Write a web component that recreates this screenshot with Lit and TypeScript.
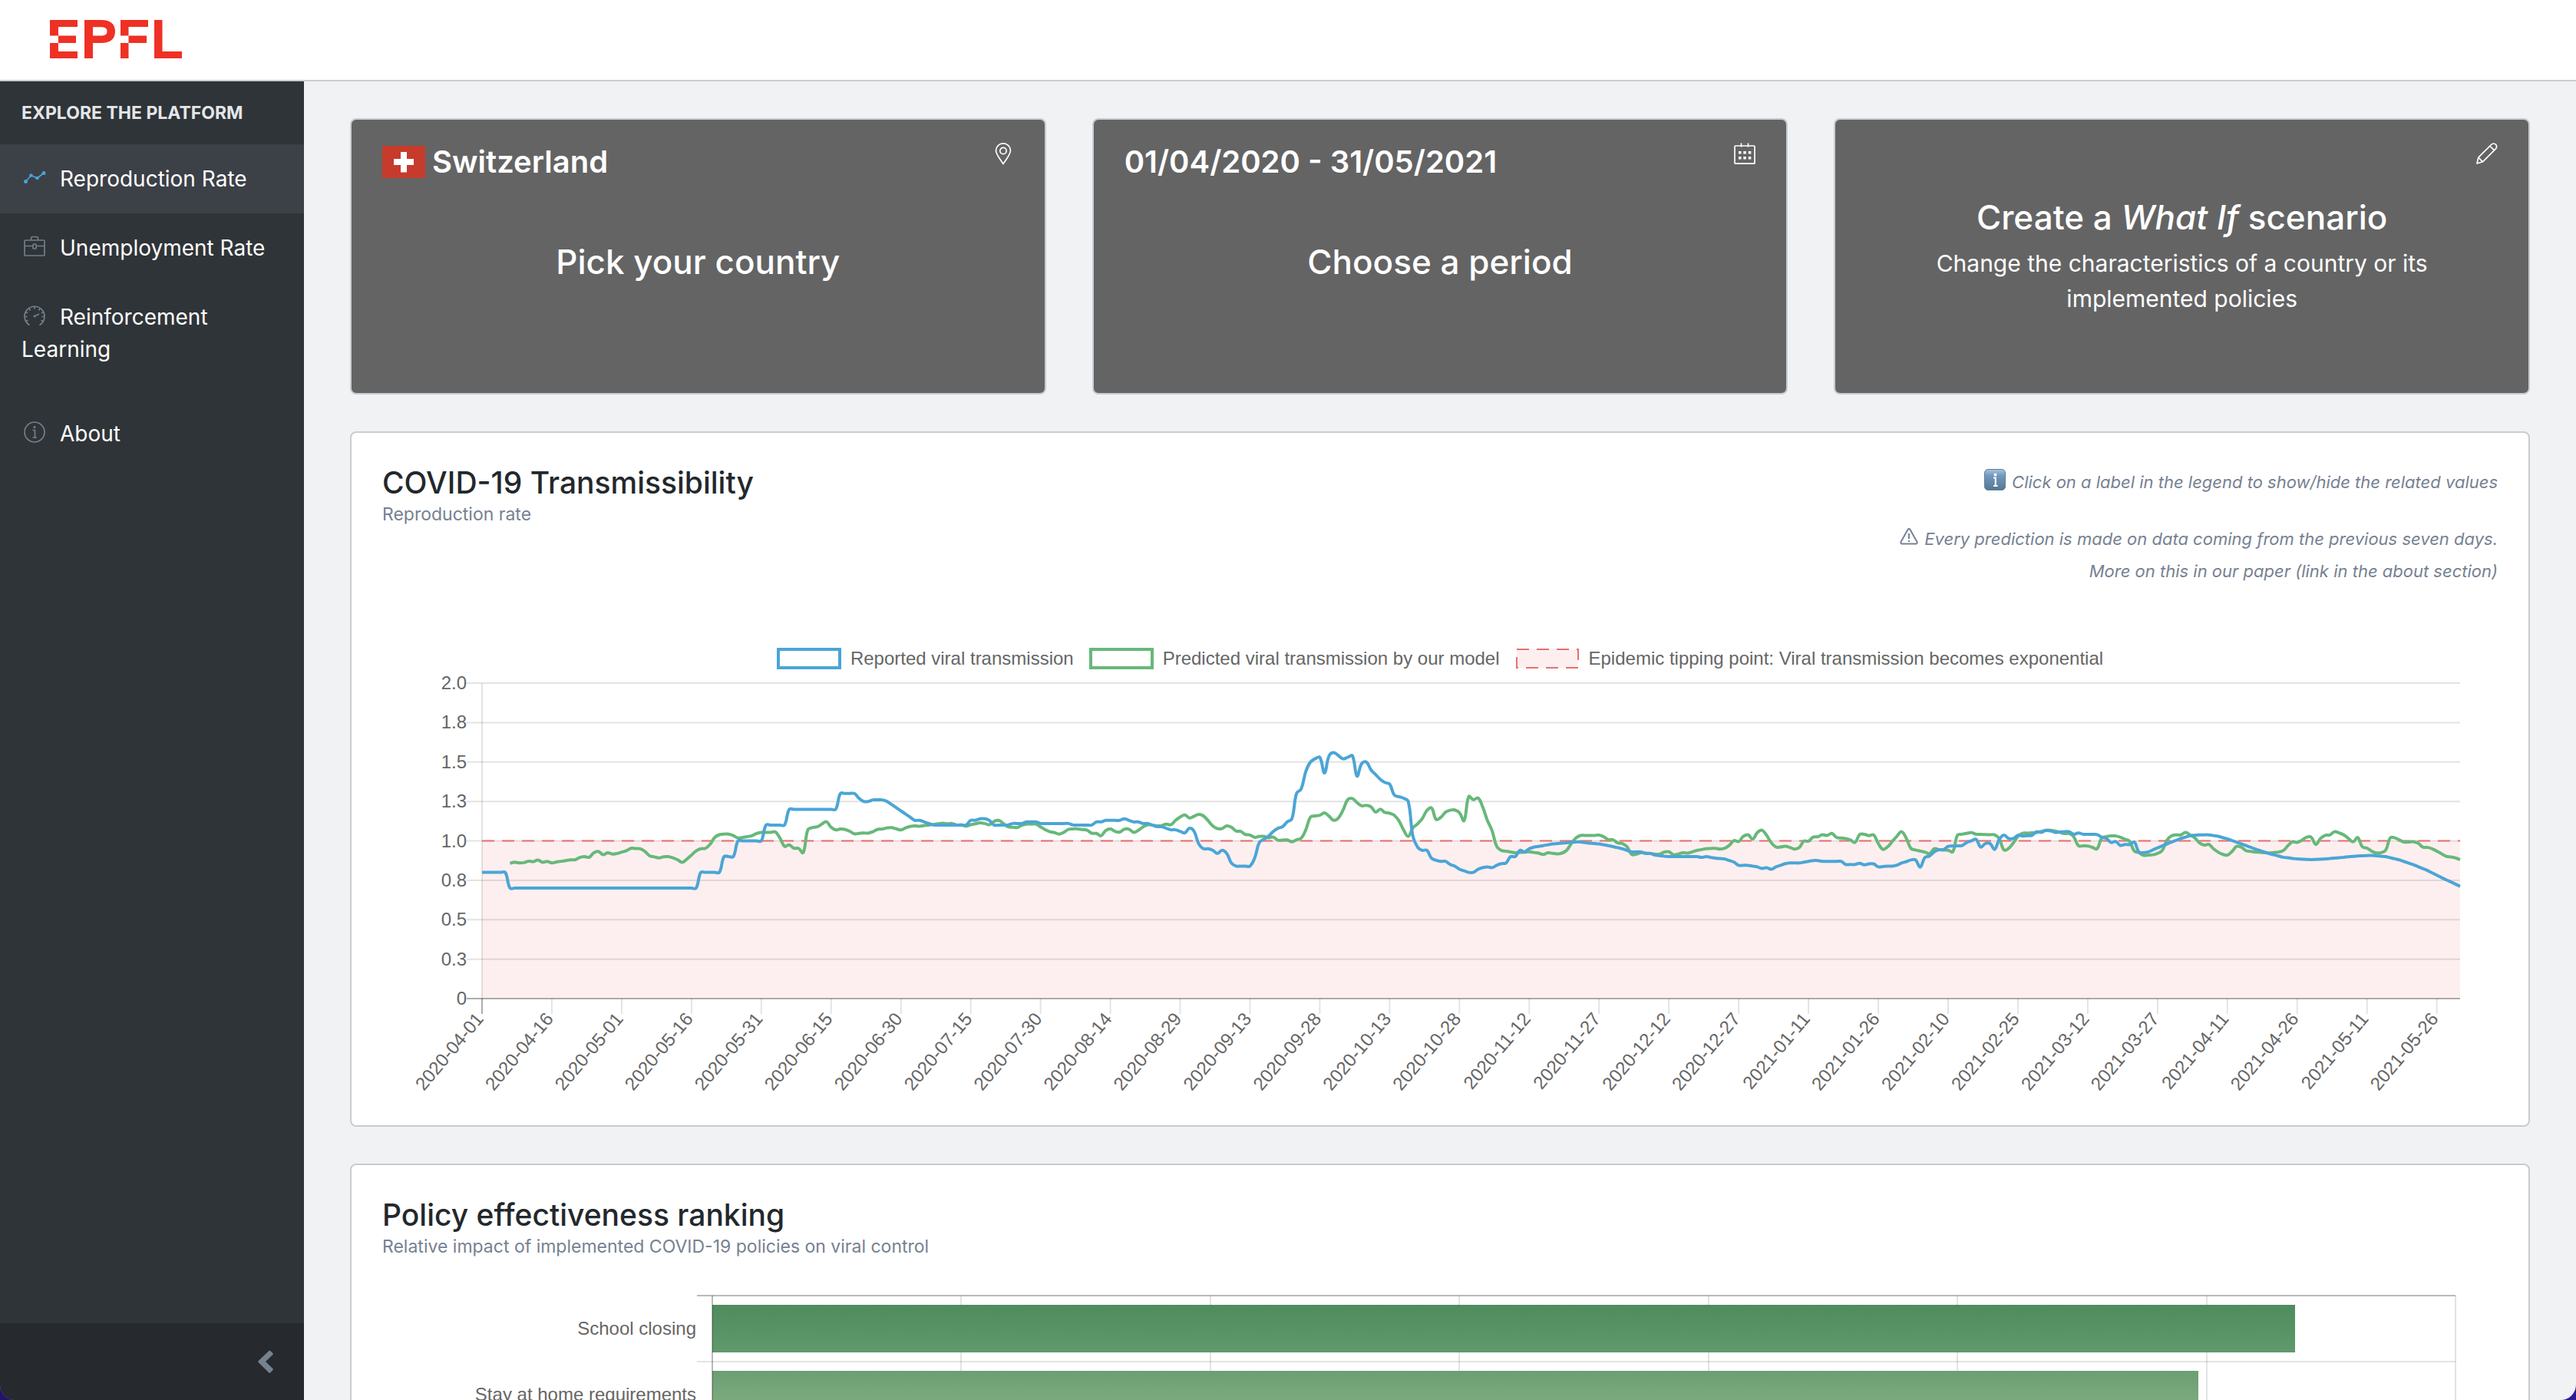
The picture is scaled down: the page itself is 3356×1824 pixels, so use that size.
import { LitElement, html, css, svg } from "lit";
import { customElement, property, state } from "lit/decorators.js";
import { classMap } from "lit/directives/class-map.js";

type Point = { x: number; y: number };

/* Reproduction rates as "day value" pairs, days counted from 2020-04-01. */
const REPORTED = `0 .8,5 .8,6 .7,46 .7,47 .8,51 .8,52 .9,54 .9,55 1,60 1,61 1.1,65 1.1,66 1.2,76 1.2,77 1.3,80 1.3,81 1.27,82 1.25,
83 1.25,84 1.26,86 1.26,87 1.25,88 1.23,93 1.13,94 1.13,97 1.1,104 1.1,105 1.13,106 1.13,107 1.14,108 1.14,109 1.13,110 1.1,
113 1.1,114 1.11,116 1.11,117 1.12,119 1.12,120 1.11,126 1.11,127 1.1,131 1.1,132 1.12,133 1.12,134 1.13,137 1.13,138 1.14,
140 1.12,141 1.12,142 1.11,143 1.11,145 1.09,146 1.09,148 1.07,149 1.07,150 1.06,151 1.05,152 1.08,153 1.06,154 .98,155 .95,
156 .95,157 .94,158 .92,159 .94,160 .92,161 .86,162 .84,165 .84,166 .89,167 .99,168 1.01,169 1.03,170 1.06,171 1.08,172 1.09,
173 1.12,174 1.14,175 1.3,176 1.33,177 1.44,178 1.5,179 1.52,180 1.53,181 1.43,182 1.54,183 1.56,184 1.54,185 1.52,186 1.53,
187 1.54,188 1.41,189 1.49,190 1.5,191 1.45,192 1.42,193 1.39,194 1.37,195 1.36,196 1.29,197 1.28,198 1.27,199 1.25,200 1.03,
201 .96,202 .94,203 .94,204 .89,205 .877,206 .87,207 .87,208 .85,209 .84,210 .82,211 .81,212 .8,213 .8,214 .82,215 .83,216 .835,
217 .83,218 .845,219 .855,220 .86,221 .9,222 .9,223 .94,224 .93,225 .95,226 .96,228 .97,230 .98,232 .985,235 .993,236 .993,
238 .985,240 .98,242 .97,245 .95,247 .93,249 .93,250 .92,251 .92,252 .91,255 .9,261 .9,262 .895,263 .9,265 .89,267 .885,268 .875,
269 .865,270 .845,272 .845,274 .835,275 .825,276 .83,277 .82,278 .835,280 .855,281 .86,283 .86,284 .865,286 .875,287 .875,288 .87,
292 .87,293 .85,295 .85,296 .858,297 .848,298 .854,299 .854,300 .835,302 .84,303 .84,304 .846,305 .86,306 .868,307 .879,308 .879,
309 .833,310 .894,311 .904,312 .93,313 .944,314 .944,315 .965,318 .97,319 .99,320 1,321 1.01,322 .96,323 .983,324 .983,325 .946,
326 1.01,327 1.037,328 1.015,329 1.015,330 1.035,331 1.03,333 1.035,334 1.058,335 1.054,336 1.065,337 1.063,338 1.054,340 1.058,
341 1.058,342 1.042,343 1.05,344 1.042,347 1.04,348 1.023,349 1.015,350 .99,351 .996,352 .971,353 .977,354 .977,355 .992,356 .929,
357 .925,358 .93,360 .956,363 .992,365 1.015,367 1.033,369 1.038,371 1.038,373 1.029,375 1.012,378 .981,381 .948,384 .919,387 .896,
390 .885,393 .881,396 .885,400 .896,403 .904,406 .908,409 .9,412 .879,415 .848,418 .812,421 .767,423 .74,425 .711`;

const PREDICTED = `6 .858,7 .865,8 .86,9 .862,10 .871,11 .868,12 .879,13 .864,14 .87,15 .86,16 .866,18 .875,19 .88,20 .88,21 .895,
22 .9,23 .896,24 .924,25 .933,26 .912,27 .925,28 .916,29 .92,31 .937,32 .953,33 .951,34 .95,35 .933,36 .905,38 .892,39 .899,40 .9,
41 .892,42 .88,43 .864,44 .884,45 .91,46 .936,47 .95,48 .953,49 .978,50 1.022,51 1.039,52 1.043,53 1.043,54 1.033,55 1.018,56 1.022,
58 1.032,59 1.047,60 1.054,62 1.054,63 1.057,64 1.018,65 .965,66 .974,67 .953,68 .953,69 .925,70 1.069,71 1.084,72 1.089,73 1.106,
74 1.121,75 1.086,76 1.069,77 1.075,78 1.072,79 1.061,80 1.045,82 1.05,83 1.049,84 1.058,85 1.073,86 1.075,87 1.082,88 1.084,
90 1.069,91 1.082,92 1.091,93 1.095,94 1.093,95 1.097,96 1.1,99 1.112,100 1.108,101 1.11,102 1.1,103 1.102,104 1.093,105 1.102,
107 1.114,108 1.11,109 1.102,110 1.123,111 1.13,112 1.11,113 1.089,115 1.084,116 1.099,117 1.106,119 1.106,120 1.089,121 1.071,
122 1.058,123 1.052,124 1.043,125 1.054,126 1.073,127 1.076,128 1.076,129 1.071,130 1.067,131 1.048,132 1.047,133 1.032,134 1.065,
135 1.075,136 1.06,137 1.056,138 1.074,139 1.074,140 1.054,141 1.067,142 1.088,143 1.102,144 1.1,145 1.095,146 1.097,147 1.106,
148 1.102,149 1.13,150 1.151,151 1.164,152 1.145,153 1.156,154 1.168,155 1.158,156 1.128,157 1.095,158 1.078,159 1.078,160 1.095,
161 1.086,162 1.063,163 1.06,164 1.041,165 1.037,166 1.022,167 1.028,168 1.028,169 1.02,170 1.024,171 1.004,173 1.006,174 .994,
175 1.007,176 1.017,177 1.07,178 1.151,179 1.158,180 1.162,181 1.177,182 1.156,183 1.13,184 1.145,185 1.196,186 1.261,187 1.268,
188 1.242,189 1.222,190 1.225,191 1.216,192 1.182,193 1.201,194 1.18,195 1.175,196 1.162,197 1.127,198 1.069,199 1.028,200 1.082,
201 1.108,202 1.14,203 1.192,204 1.209,205 1.136,206 1.149,207 1.182,208 1.194,209 1.196,210 1.179,211 1.128,212 1.281,213 1.261,
214 1.272,215 1.214,216 1.13,217 1.065,218 .966,219 .939,220 .935,222 .924,225 .931,227 .922,228 .914,229 .924,231 .918,232 .922,
233 .939,234 .981,235 1.017,236 1.034,239 1.034,240 1.037,241 1.026,242 1.007,243 1.007,244 .987,245 .983,246 .963,247 .914,
248 .916,249 .925,252 .916,253 .916,254 .929,255 .931,256 .912,257 .916,258 .924,259 .922,261 .939,263 .95,265 .953,266 .948,
267 .953,268 .972,269 1.002,270 .996,271 1.028,272 1.039,273 1.011,274 1.052,275 1.067,276 1.035,277 .989,278 .961,279 .961,
280 .966,281 .958,282 .948,283 .957,284 .998,285 .998,286 1.024,287 1.026,288 1.039,289 1.034,290 1.047,291 1.022,293 1.014,
294 1.006,295 .99,296 1.04,297 1.042,298 1.033,299 1.038,300 .983,301 .946,302 .962,303 .996,304 1.029,305 1.058,306 1.017,
307 .952,308 .942,310 .929,311 .919,312 .95,313 .944,315 .94,316 .931,317 1.035,318 1.042,320 1.052,321 1.042,325 1.038,326 1.013,
327 .942,328 .952,329 .987,330 1.029,331 1.048,334 1.052,336 1.067,337 1.067,338 1.062,340 1.046,341 1.046,342 1.025,343 .969,
345 .967,347 .95,348 1.017,349 1.027,350 1.031,351 1.031,352 1.023,353 1.01,354 .996,355 .935,356 .925,357 .908,359 .912,360 .921,
361 .938,362 1.004,363 1.031,364 1.038,365 1.038,366 1.054,367 1.037,368 1.019,369 .987,370 .973,371 .977,372 .95,373 .929,374 .915,
375 .91,376 .933,377 .965,378 .96,379 .938,381 .929,384 .923,386 .929,387 .938,388 .969,389 .994,390 .99,391 1.004,392 1.023,
393 1.023,394 .977,395 1.015,396 1.035,397 1.037,398 1.058,399 1.05,400 1.038,401 1.015,402 .994,403 1.021,404 .962,405 .954,
406 .935,407 .923,408 .925,409 .94,410 1.019,411 1.019,413 .992,415 .994,416 .985,417 .96,418 .958,419 .95,420 .935,422 .902,
423 .898,424 .892,425 .881`;

const LAST_DAY = 425;
const PLOT = { left: 130, right: 2707, top: 18, bottom: 429 };

const plotX = (day: number) =>
  PLOT.left + ((PLOT.right - PLOT.left) * day) / LAST_DAY;
const plotY = (value: number) =>
  PLOT.bottom - ((PLOT.bottom - PLOT.top) * value) / 2;

/* One plotted point per day, filled in linearly between the stored pairs. */
function daily(series: string): Point[] {
  const pairs = series.split(",").map((p) => p.trim().split(" ").map(Number));
  const out: Point[] = [];
  pairs.forEach(([day, value], i) => {
    const next = pairs[i + 1];
    const span = next ? next[0] - day : 1;
    for (let k = 0; k < span; k++) {
      const v = next ? value + ((next[1] - value) * k) / span : value;
      out.push({ x: plotX(day + k), y: plotY(v) });
    }
  });
  return out;
}

/* Bezier curve through the points, with distance-weighted control points. */
function smoothPath(points: Point[], tension = 0.4): string {
  const controls = points.map((p, i) => {
    const prev = points[i - 1] ?? p;
    const next = points[i + 1] ?? p;
    const d1 = Math.hypot(p.x - prev.x, p.y - prev.y);
    const d2 = Math.hypot(next.x - p.x, next.y - p.y);
    const total = d1 + d2 || 1;
    const a = (tension * d1) / total;
    const b = (tension * d2) / total;
    const dx = next.x - prev.x;
    const dy = next.y - prev.y;
    return {
      before: { x: p.x - a * dx, y: p.y - a * dy },
      after: { x: p.x + b * dx, y: p.y + b * dy },
    };
  });
  const f = (n: number) => n.toFixed(1);
  return points
    .map((p, i) => {
      if (i === 0) return `M${f(p.x)} ${f(p.y)}`;
      const c1 = controls[i - 1].after;
      const c2 = controls[i].before;
      return `C${f(c1.x)} ${f(c1.y)} ${f(c2.x)} ${f(c2.y)} ${f(p.x)} ${f(p.y)}`;
    })
    .join("");
}

const REPORTED_PATH = smoothPath(daily(REPORTED));
const PREDICTED_PATH = smoothPath(daily(PREDICTED));

const DATE_TICKS = Array.from({ length: 29 }, (_, i) => {
  const date = new Date(Date.UTC(2020, 3, 1 + i * 15));
  return { x: plotX(i * 15), label: date.toISOString().slice(0, 10) };
});

const VALUE_TICKS = ["0", "0.3", "0.5", "0.8", "1.0", "1.3", "1.5", "1.8", "2.0"];

const ICONS = {
  trend: svg`<g fill="currentColor" stroke="none"><circle cx="2.5" cy="19.5" r="2.5"/><circle cx="9.5" cy="11.5" r="2.3"/><circle cx="17.5" cy="15" r="2.3"/><circle cx="26" cy="8.5" r="2.5"/></g><path d="M2.5 19.5 9.5 11.5 17.5 15 26 8.5"/>`,
  briefcase: svg`<rect x="1" y="6" width="26" height="20" rx="1"/><path d="M9.500 6V3.500a2 2 0 0 1 2-2h5a2 2 0 0 1 2 2V6M1 13.500h11M16 13.500h11"/><rect x="12" y="11" width="4" height="6" rx="1"/>`,
  gauge: svg`<path d="M7.500 26.500A13 13 0 1 1 20.500 26.500" /><path d="M14 2.500v3M7 5l1.500 2.500M21 5l-1.500 2.500M2.500 9.500l2.500 1.500M25.500 9.500 23 11M1.500 15.500h3M26.500 15.500h-3M3 21.500l2.500-1.200M25 21.500l-2.500-1.200M14 15l6-3"/><circle cx="14" cy="15" r="1.500" fill="currentColor" stroke="none"/>`,
  info: svg`<circle cx="14" cy="14" r="13"/><circle cx="14" cy="7.500" r="1.600" fill="currentColor" stroke="none"/><path d="M11.500 11.500H14.500V20.500M11.500 21h5.500"/>`,
  pin: svg`<path d="M14 27.500C9.500 20.500 4.500 15 4.500 10.200a9.500 9.300 0 0 1 19 0C23.500 15 18.500 20.500 14 27.500Z"/><circle cx="14" cy="10.500" r="4.200"/>`,
  calendar: svg`<rect x="1" y="4" width="26" height="23.200" rx="1"/><path d="M9.500 0.500v5M18.500 0.500v5"/><g fill="currentColor" stroke="none"><rect x="6" y="11" width="3.500" height="3.500"/><rect x="12.300" y="11" width="3.500" height="3.500"/><rect x="18.800" y="11" width="3.500" height="3.500"/><rect x="6" y="18" width="3.500" height="3.500"/><rect x="12.300" y="18" width="3.500" height="3.500"/><rect x="18.800" y="18" width="3.500" height="3.500"/></g>`,
  pencil: svg`<path d="M1 27 2.800 19.200 20 2.200a3.600 3.600 0 0 1 5.400 0 3.800 3.800 0 0 1 0 5.600L8.500 24.800 1 27ZM2.800 19.200 8.500 24.800M18 4.300 23.500 9.800"/>`,
};

type IconName = keyof typeof ICONS;

@customElement("line-icon")
class LineIcon extends LitElement {
  @property() name: IconName = "info";

  static styles = css`
    :host {
      display: inline-block;
      width: 28px;
      height: 28px;
    }
    .glyph {
      display: block;
      width: 100%;
      height: 100%;
      fill: none;
      stroke: currentColor;
      stroke-width: 1.7;
      stroke-linejoin: round;
      overflow: visible;
    }
  `;

  render() {
    return html`<svg class="glyph" viewBox="0 0 28 28" aria-hidden="true">
      ${ICONS[this.name]}
    </svg>`;
  }
}

@customElement("side-nav")
class SideNav extends LitElement {
  @state() private active = "Reproduction Rate";

  private items: { label: string; icon: IconName; spaced?: boolean }[] = [
    { label: "Reproduction Rate", icon: "trend" },
    { label: "Unemployment Rate", icon: "briefcase" },
    { label: "Reinforcement Learning", icon: "gauge" },
    { label: "About", icon: "info", spaced: true },
  ];

  static styles = css`
    :host {
      display: flex;
      flex-direction: column;
      background: #2f3438;
      color: #ffffff;
    }
    .title {
      margin: 0;
      padding: 24px 28px;
      font-size: 23px;
      line-height: 34px;
      font-weight: 700;
      text-transform: uppercase;
      color: #e4e6e8;
    }
    .list {
      flex: 1;
      margin: 0;
      padding: 0;
      list-style: none;
    }
    .link {
      display: block;
      padding: 24px 28px;
      font-size: 28px;
      line-height: 42px;
      color: inherit;
      text-decoration: none;
    }
    .link.active {
      background: #3c4047;
    }
    .spaced {
      margin-top: 20px;
    }
    .icon {
      margin: 0 19px 0 3px;
      vertical-align: -2px;
      color: #737e8c;
    }
    .active .icon {
      color: #4ba3d3;
    }
    .collapse {
      display: flex;
      align-items: center;
      justify-content: flex-end;
      height: 100px;
      padding: 0 38px;
      border: 0;
      background: #26292d;
      cursor: pointer;
    }
    .chevron {
      width: 22px;
      height: 30px;
      fill: #768290;
    }
  `;

  render() {
    return html`
      <h2 class="title">Explore the platform</h2>
      <ul class="list">
        ${this.items.map(
          (item) => html`<li class=${classMap({ spaced: !!item.spaced })}>
            <a
              class=${classMap({ link: true, active: item.label === this.active })}
              href="#"
              @click=${() => (this.active = item.label)}
              ><line-icon class="icon" name=${item.icon}></line-icon>${item.label}</a
            >
          </li>`
        )}
      </ul>
      <button class="collapse" aria-label="Collapse menu">
        <svg class="chevron" viewBox="0 0 22 30" aria-hidden="true">
          <path d="M.7 14 14.200.900a1.500 1.500 0 0 1 2.100 0l3 3a1.500 1.500 0 0 1 0 2.100L10 15l9.300 9.100a1.500 1.500 0 0 1 0 2.100l-3 3a1.500 1.500 0 0 1-2.100 0L.700 16.100a1.500 1.500 0 0 1 0-2.100Z" />
        </svg>
      </button>
    `;
  }
}

@customElement("rate-chart")
class RateChart extends LitElement {
  @state() private hidden_: Record<string, boolean> = {};

  private toggle(key: string) {
    this.hidden_ = { ...this.hidden_, [key]: !this.hidden_[key] };
  }

  static styles = css`
    :host {
      display: block;
      font-family: "Liberation Sans", Arial, sans-serif;
      color: #666666;
    }
    .legend {
      display: flex;
      flex-wrap: wrap;
      justify-content: center;
      gap: 20px;
    }
    .entry {
      display: flex;
      align-items: center;
      gap: 12px;
      padding: 0;
      border: 0;
      background: none;
      font: inherit;
      font-size: 24px;
      line-height: 28px;
      color: inherit;
      cursor: pointer;
    }
    .entry.off {
      text-decoration: line-through;
    }
    .swatch {
      width: 84px;
      height: 28px;
    }
    .swatch-box {
      stroke-width: 4;
      fill: none;
    }
    .plot {
      display: block;
      width: 100%;
      height: auto;
      overflow: visible;
    }
    .grid {
      stroke: rgba(0, 0, 0, 0.11);
      stroke-width: 2;
    }
    .axis {
      stroke: rgba(0, 0, 0, 0.32);
      stroke-width: 2;
    }
    .tick {
      font-size: 24px;
      fill: #666666;
      text-anchor: end;
    }
    .series {
      fill: none;
      stroke-width: 4;
    }
    .reported {
      stroke: #4ba5d6;
    }
    .predicted {
      stroke: #67b87a;
    }
    .zone {
      fill: #e55353;
      fill-opacity: 0.09;
    }
    .threshold {
      stroke: #e9706f;
      stroke-width: 2;
      stroke-dasharray: 16 10;
    }
  `;

  render() {
    const off = this.hidden_;
    const entries = [
      {
        key: "reported",
        label: "Reported viral transmission",
        box: svg`<rect class="swatch-box reported" x="2" y="2" width="80" height="24"/>`,
      },
      {
        key: "predicted",
        label: "Predicted viral transmission by our model",
        box: svg`<rect class="swatch-box predicted" x="2" y="2" width="80" height="24"/>`,
      },
      {
        key: "threshold",
        label: "Epidemic tipping point: Viral transmission becomes exponential",
        box: svg`<rect class="zone threshold" x="2" y="2" width="80" height="24"/>`,
      },
    ];
    return html`
      <div class="legend">
        ${entries.map(
          (e) => html`<button
            class=${classMap({ entry: true, off: !!off[e.key] })}
            @click=${() => this.toggle(e.key)}
          >
            <svg class="swatch" viewBox="0 0 84 28" aria-hidden="true">${e.box}</svg>
            <span>${e.label}</span>
          </button>`
        )}
      </div>
      <svg class="plot" viewBox="0 0 2756 554" role="img" aria-label="Reproduction rate over time">
        ${VALUE_TICKS.map((label, i) => {
          const y = plotY(i / 4);
          return svg`<line class=${i ? "grid" : "axis"} x1="110" x2=${PLOT.right} y1=${y} y2=${y}/>
            <text class="tick" x="110" y=${y + 8}>${label}</text>`;
        })}
        <line class="grid" x1=${PLOT.left} x2=${PLOT.left} y1=${PLOT.top} y2=${PLOT.bottom} />
        ${DATE_TICKS.map(
          (t, i) => svg`<line class=${i ? "grid" : "axis"} x1=${t.x} x2=${t.x} y1=${PLOT.bottom} y2=${PLOT.bottom + 20}/>
            <text class="tick" transform="translate(${t.x - 3} ${PLOT.bottom + 22}) rotate(-50)" y="8">${t.label}</text>`
        )}
        ${off.threshold
          ? null
          : svg`<rect class="zone" x=${PLOT.left} y=${plotY(1)} width=${PLOT.right - PLOT.left} height=${PLOT.bottom - plotY(1)}/>
            <line class="threshold" x1=${PLOT.left} x2=${PLOT.right} y1=${plotY(1)} y2=${plotY(1)}/>`}
        ${off.predicted ? null : svg`<path class="series predicted" d=${PREDICTED_PATH}/>`}
        ${off.reported ? null : svg`<path class="series reported" d=${REPORTED_PATH}/>`}
      </svg>
    `;
  }
}

@customElement("ranking-chart")
class RankingChart extends LitElement {
  private rows = [
    { label: "School closing", width: 2062, from: "#4e8b5e", to: "#609a6b" },
    { label: "Stay at home requirements", width: 1936, from: "#6c9e73", to: "#84b184" },
  ];

  static styles = css`
    :host {
      display: block;
      font-family: "Liberation Sans", Arial, sans-serif;
    }
    .plot {
      display: block;
      width: 100%;
      height: auto;
    }
    .grid {
      stroke: rgba(0, 0, 0, 0.11);
      stroke-width: 2;
    }
    .axis {
      stroke: rgba(0, 0, 0, 0.27);
      stroke-width: 2;
    }
    .label {
      font-size: 24px;
      fill: #666666;
      text-anchor: end;
    }
  `;

  render() {
    const left = 430;
    const right = 2701;
    const top = 6;
    const row = 86;
    const bottom = top + row * this.rows.length;
    return html`<svg class="plot" viewBox="0 0 2756 190" role="img" aria-label="Policy effectiveness ranking">
      <defs>
        ${this.rows.map(
          (r, i) => svg`<linearGradient id="bar-${i}" x1="0" y1="0" x2="0" y2="1">
            <stop offset="0" stop-color=${r.from}/><stop offset="1" stop-color=${r.to}/>
          </linearGradient>`
        )}
      </defs>
      ${[1, 2, 3, 4, 5, 6, 7].map((i) => {
        const x = left + Math.round(((right - left) * i) / 7);
        return svg`<line class="grid" x1=${x} x2=${x} y1=${top} y2=${bottom}/>`;
      })}
      ${this.rows.map((r, i) => {
        const y = top + row * i;
        return svg`<line class=${i ? "grid" : "axis"} x1="410" x2=${right} y1=${y} y2=${y}/>
          <rect x=${left} y=${y + 12} width=${r.width} height="62" fill="url(#bar-${i})"/>
          <text class="label" x="409" y=${y + 51}>${r.label}</text>`;
      })}
      <line class="axis" x1=${left} x2=${left} y1=${top} y2=${bottom} />
    </svg>`;
  }
}

@customElement("app-root")
class AppRoot extends LitElement {
  static styles = css`
    :host {
      display: block;
      background: linear-gradient(90deg, #22146a, #2f1b9a);
      font-family: Inter, "Liberation Sans", sans-serif;
      color: #23282c;
    }
    .window {
      display: grid;
      grid-template: 106px minmax(0, 1fr) / 396px minmax(0, 1fr);
      height: 100vh;
      border-radius: 0 0 20px 20px;
      overflow: hidden;
      background: #f0f2f4;
    }
    .header {
      grid-column: 1 / -1;
      box-sizing: border-box;
      display: flex;
      align-items: center;
      padding: 0 65px 2px;
      border-bottom: 2px solid #c8cdd2;
      background: #ffffff;
    }
    .logo {
      display: block;
      width: 172px;
      height: 50px;
      fill: #ee3124;
    }
    .main {
      display: flex;
      flex-direction: column;
      gap: 48px;
      padding: 48px 60px;
      overflow: hidden;
    }
    .pickers {
      display: grid;
      grid-template-columns: repeat(3, minmax(0, 1fr));
      gap: 60px;
    }
    .picker,
    .card {
      box-sizing: border-box;
      border: 2px solid #c8cdd2;
      border-radius: 8px;
    }
    .picker {
      display: flex;
      flex-direction: column;
      justify-content: flex-start;
      min-height: 360px;
      padding: 30px 40px;
      background: #646464;
      color: #ffffff;
      font: inherit;
      text-align: center;
      cursor: pointer;
    }
    .picker-top {
      display: flex;
      justify-content: space-between;
      align-items: flex-start;
      width: 100%;
      height: 50px;
      font-size: 40px;
      line-height: 50px;
      font-weight: 600;
    }
    .picker-value {
      display: flex;
      align-items: center;
      gap: 9px;
    }
    .flag {
      width: 56px;
      height: 42px;
    }
    .picker-title {
      width: 100%;
      margin-top: 76px;
      font-size: 44px;
      line-height: 58px;
      font-weight: 500;
    }
    .picker-title.raised {
      margin-top: 18px;
    }
    .picker-text {
      box-sizing: border-box;
      width: 100%;
      margin-top: 8px;
      padding: 0 80px;
      font-size: 30px;
      line-height: 46px;
    }
    .card {
      flex: none;
      padding: 40px;
      background: #ffffff;
    }
    .card-head {
      display: flex;
      justify-content: space-between;
      align-items: flex-start;
    }
    .card-title {
      margin: 0;
      font-size: 39px;
      line-height: 50px;
      font-weight: 500;
    }
    .card-sub {
      font-size: 23px;
      line-height: 32px;
      color: #768192;
    }
    .notes {
      display: flex;
      flex-direction: column;
      gap: 32px;
      padding-top: 3px;
      font-size: 22px;
      line-height: 42px;
      font-style: italic;
      text-align: right;
      color: #768192;
    }
    .note {
      margin: 0;
    }
    .badge {
      width: 28px;
      height: 28px;
      margin-right: 8px;
      vertical-align: -3px;
    }
    .warn {
      width: 24px;
      height: 22px;
      margin-right: 8px;
      fill: none;
      stroke: #768192;
      stroke-width: 2;
      stroke-linejoin: round;
    }
    .rates {
      margin-top: 79px;
    }
    .ranking {
      margin-top: 42px;
    }
  `;

  render() {
    return html`
      <div class="window">
        <header class="header">
          <svg class="logo" viewBox="0 0 172 50" role="img" aria-label="EPFL">
            <rect width="36" height="9" />
            <rect width="11" height="20.500" />
            <rect x="11" y="20.500" width="23" height="9.500" />
            <rect y="30" width="11" height="20" />
            <rect y="41" width="36" height="9" />
            <rect x="45" width="11" height="50" />
            <path fill-rule="evenodd" d="M56 0H67C79 0 85 5.500 85 15S79 30 67 30H56ZM56 9.300V20.500H66C72 20.500 74.500 19 74.500 15S72 9.300 66 9.300Z" />
            <rect x="92" width="36" height="9" />
            <rect x="92" width="10.500" height="20.500" />
            <rect x="102.500" y="20.500" width="23.500" height="9.500" />
            <rect x="92" y="30" width="10.500" height="20" />
            <rect x="136" width="10.500" height="50" />
            <rect x="136" y="41" width="36" height="9" />
          </svg>
        </header>
        <side-nav></side-nav>
        <main class="main">
          <div class="pickers">
            <button class="picker">
              <span class="picker-top">
                <span class="picker-value">
                  <svg class="flag" viewBox="0 0 56 42" aria-hidden="true">
                    <rect width="56" height="42" fill="#c63b2c" />
                    <path fill="#ffffff" d="M24 8h8v9h9v8h-9v9.500h-8V25h-9v-8h9Z" />
                  </svg>
                  Switzerland
                </span>
                <line-icon name="pin"></line-icon>
              </span>
              <span class="picker-title">Pick your country</span>
            </button>
            <button class="picker">
              <span class="picker-top">
                <span class="picker-value">01/04/2020 - 31/05/2021</span>
                <line-icon name="calendar"></line-icon>
              </span>
              <span class="picker-title">Choose a period</span>
            </button>
            <button class="picker">
              <span class="picker-top">
                <span class="picker-value"></span>
                <line-icon name="pencil"></line-icon>
              </span>
              <span class="picker-title raised">Create a <i>What If</i> scenario</span>
              <span class="picker-text">Change the characteristics of a country or its implemented policies</span>
            </button>
          </div>
          <section class="card">
            <div class="card-head">
              <div>
                <h1 class="card-title">COVID-19 Transmissibility</h1>
                <div class="card-sub">Reproduction rate</div>
              </div>
              <div class="notes">
                <p class="note">
                  <svg class="badge" viewBox="0 0 28 28" aria-hidden="true">
                    <defs>
                      <linearGradient id="badge-fill" x1="0" y1="0" x2="0" y2="1">
                        <stop offset="0" stop-color="#a9c4dc" />
                        <stop offset=".3" stop-color="#7399be" />
                        <stop offset="1" stop-color="#567790" />
                      </linearGradient>
                    </defs>
                    <rect x=".500" y=".500" width="27" height="27" rx="4.500" fill="url(#badge-fill)" stroke="#5c7f9c" />
                    <circle cx="14.500" cy="7.500" r="2" fill="#ffffff" />
                    <path d="M12 11.500H14.800V21.500M12 22H17.500" fill="none" stroke="#ffffff" stroke-width="2" /></svg
                  >Click on a label in the legend to show/hide the related values
                </p>
                <p class="note">
                  <svg class="warn" viewBox="0 0 24 22" aria-hidden="true">
                    <path d="M10.500 2a1.700 1.700 0 0 1 3 0L22.500 18a1.700 1.700 0 0 1-1.500 2.500H3A1.700 1.700 0 0 1 1.500 18ZM12 7v7M12 16v2" /></svg
                  >Every prediction is made on data coming from the previous seven days.<br />More on this in our paper (link in the about section)
                </p>
              </div>
            </div>
            <rate-chart class="rates"></rate-chart>
          </section>
          <section class="card">
            <h2 class="card-title">Policy effectiveness ranking</h2>
            <div class="card-sub">Relative impact of implemented COVID-19 policies on viral control</div>
            <ranking-chart class="ranking"></ranking-chart>
          </section>
        </main>
      </div>
    `;
  }
}
